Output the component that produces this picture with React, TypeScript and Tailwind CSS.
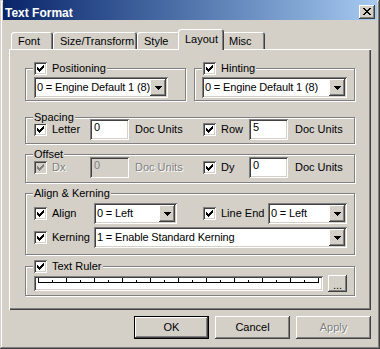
import React from 'react';

const raised = 'shadow-[inset_-1px_-1px_#404040,inset_1px_1px_#fff,inset_-2px_-2px_#808080,inset_2px_2px_#d4d0c8]';
const sunken = 'shadow-[inset_1px_1px_#808080,inset_-1px_-1px_#fff,inset_2px_2px_#404040,inset_-2px_-2px_#d4d0c8]';
const grayText = 'text-[#808080] [text-shadow:1px_1px_0_#fff]';

const CHECK = [
  [6, 0], [5, 1], [6, 1], [0, 2], [4, 2], [5, 2], [6, 2], [0, 3], [1, 3], [3, 3], [4, 3], [5, 3],
  [0, 4], [1, 4], [2, 4], [3, 4], [4, 4], [1, 5], [2, 5], [3, 5], [2, 6],
];
const CLOSE = [
  [0, 0], [1, 0], [6, 0], [7, 0], [1, 1], [2, 1], [5, 1], [6, 1], [2, 2], [3, 2], [4, 2], [5, 2],
  [3, 3], [4, 3], [2, 4], [3, 4], [4, 4], [5, 4], [1, 5], [2, 5], [5, 5], [6, 5], [0, 6], [1, 6], [6, 6], [7, 6],
];

function Pixels({ cells, w, h, color }: { cells: number[][]; w: number; h: number; color: string }) {
  return (
    <svg width={w} height={h} className="block" shapeRendering="crispEdges">
      {cells.map(([x, y]) => (
        <rect key={`${x}-${y}`} x={x} y={y} width={1} height={1} fill={color} />
      ))}
    </svg>
  );
}

function Check({ off }: { off?: boolean }) {
  return (
    <span className={`shrink-0 w-[13px] h-[13px] p-[3px] ${sunken} ${off ? 'bg-[#d4d0c8]' : 'bg-white'}`}>
      <Pixels cells={CHECK} w={7} h={7} color={off ? '#808080' : '#000'} />
    </span>
  );
}

function Arrow() {
  return (
    <svg width="7" height="4" className="block" shapeRendering="crispEdges">
      <rect x="0" y="0" width="7" height="1" fill="#000" />
      <rect x="1" y="1" width="5" height="1" fill="#000" />
      <rect x="2" y="2" width="3" height="1" fill="#000" />
      <rect x="3" y="3" width="1" height="1" fill="#000" />
    </svg>
  );
}

function Select({ value, className }: { value: string; className: string }) {
  return (
    <div className={`h-[21px] bg-white ${sunken} flex items-center p-[2px] ${className}`}>
      <span className="flex-1 min-w-0 pl-[1px] whitespace-nowrap tracking-[-0.15px]">{value}</span>
      <span className={`shrink-0 w-[16px] h-[17px] bg-[#d4d0c8] ${raised} flex items-center justify-center`}>
        <Arrow />
      </span>
    </div>
  );
}

function Field({ value, off }: { value: string; off?: boolean }) {
  return (
    <div className={`w-[39px] h-[21px] ${sunken} pl-[4px] pt-[2px] ${off ? 'bg-[#d4d0c8] text-[#808080]' : 'bg-white'}`}>
      {value}
    </div>
  );
}

function Group({ legend, className, children }: { legend: React.ReactNode; className: string; children: React.ReactNode }) {
  return (
    <div className={`relative border border-[#808080] shadow-[inset_1px_1px_#fff,1px_1px_#fff] ${className}`}>
      <div className="absolute left-[7px] -top-[7px] h-[13px] px-[1px] bg-[#d4d0c8] flex items-center gap-[5px]">
        {legend}
      </div>
      {children}
    </div>
  );
}

function Labeled({ label, off, className }: { label: string; off?: boolean; className: string }) {
  return (
    <div className={`flex items-center gap-[5px] ${className}`}>
      <Check off={off} />
      <span className={off ? grayText : ''}>{label}</span>
    </div>
  );
}

function Ruler() {
  const ticks = Array.from({ length: 21 }, (_, k) => k);
  return (
    <div className={`w-[289px] h-[15px] bg-white ${sunken}`}>
      <svg width="289" height="15" className="block" shapeRendering="crispEdges">
        <rect x="4" y="6" width="281" height="1" fill="#000" />
        {ticks.map((k) => (
          <rect key={k} x={4 + k * 14} y={k % 2 === 0 ? 2 : 4} width="1" height={k % 2 === 0 ? 4 : 2} fill="#000" />
        ))}
      </svg>
    </div>
  );
}

function Tab({ label, className }: { label: string; className: string }) {
  return (
    <div className={`rounded-t-[3px] bg-[#d4d0c8] shadow-[inset_1px_1px_#fff,inset_-1px_0_#404040,inset_-2px_0_#808080] pl-[7px] ${className}`}>
      {label}
    </div>
  );
}

export default function App() {
  return (
    <div className="w-[380px] h-[349px] overflow-hidden bg-[#d4d0c8] px-[3px] flex flex-col font-['Liberation_Sans',Arial,sans-serif] text-[11px] leading-[13px] text-black shadow-[inset_-1px_-1px_#404040,inset_1px_1px_#d4d0c8,inset_-2px_-2px_#808080,inset_2px_2px_#fff]">
      <div className="h-[20px] shrink-0 bg-linear-to-r from-[#0a246a] to-[#a6caf0] flex justify-between pl-[2px] pr-[2px]">
        <span className="pt-[6px] leading-[14px] text-[12px] font-bold text-white">Text Format</span>
        <span className={`self-end mb-[1px] w-[16px] h-[14px] bg-[#d4d0c8] ${raised} pl-[4px] pt-[3px]`}>
          <Pixels cells={CLOSE} w={8} h={7} color="#000" />
        </span>
      </div>

      <div className="mt-[9px] ml-[8px] h-[20px] flex items-end">
        <Tab label="Font" className="w-[42px] h-[17px] pt-[3px]" />
        <Tab label="Size/Transform" className="w-[84px] h-[17px] pt-[3px]" />
        <Tab label="Style" className="w-[43px] h-[17px] pt-[3px]" />
        <Tab label="Layout" className="relative z-10 -ml-[2px] -mb-[1px] w-[46px] h-[21px] pt-[4px]" />
        <Tab label="Misc" className="-ml-[2px] w-[43px] h-[17px] pt-[3px]" />
      </div>

      <div className="ml-[6px] w-[362px] h-[261px] shrink-0 pt-px px-[16px] flex flex-col shadow-[inset_1px_1px_#fff,inset_-1px_-1px_#404040,inset_-2px_-2px_#808080]">
        <div className="mt-[18px] flex gap-[8px]">
          <Group
            className="w-[161px] pt-[8px] pb-[2px] pl-[8px]"
            legend={<><Check /><span>Positioning</span></>}
          >
            <Select value="0 = Engine Default 1 (8)" className="w-[134px]" />
          </Group>
          <Group
            className="w-[161px] pt-[8px] pb-[2px] pl-[7px]"
            legend={<><Check /><span>Hinting</span></>}
          >
            <Select value="0 = Engine Default 1 (8)" className="w-[145px]" />
          </Group>
        </div>

        <Group className="mt-[16px] pt-[1px] pb-[3px] pl-[8px]" legend={<span>Spacing</span>}>
          <div className="flex items-center">
            <div className="w-[169px] flex items-center">
              <Labeled label="Letter" className="w-[56px]" />
              <Field value="0" />
              <span className="ml-[6px]">Doc Units</span>
            </div>
            <div className="flex items-center">
              <Labeled label="Row" className="w-[46px]" />
              <Field value="5" />
              <span className="ml-[7px]">Doc Units</span>
            </div>
          </div>
        </Group>

        <Group className="mt-[10px] pt-[2px] pb-[4px] pl-[8px]" legend={<span>Offset</span>}>
          <div className="flex items-center">
            <div className="w-[169px] flex items-center">
              <Labeled label="Dx" off className="w-[56px]" />
              <Field value="0" off />
              <span className={`ml-[6px] ${grayText}`}>Doc Units</span>
            </div>
            <div className="flex items-center">
              <Labeled label="Dy" className="w-[46px]" />
              <Field value="0" />
              <span className="ml-[7px]">Doc Units</span>
            </div>
          </div>
        </Group>

        <Group className="mt-[10px] pt-[9px] pb-[6px] pl-[8px] flex flex-col gap-[3px]" legend={<span>Align &amp; Kerning</span>}>
          <div className="flex items-center">
            <div className="w-[169px] flex items-center">
              <Labeled label="Align" className="w-[60px]" />
              <Select value="0 = Left" className="w-[83px]" />
            </div>
            <div className="flex items-center">
              <Labeled label="Line End" className="w-[65px]" />
              <Select value="0 = Left" className="w-[79px]" />
            </div>
          </div>
          <div className="flex items-center">
            <Labeled label="Kerning" className="w-[60px]" />
            <Select value="1 = Enable Standard Kerning" className="w-[253px]" />
          </div>
        </Group>

        <Group className="mt-[11px] pt-[8px] pb-[3px] pl-[8px]" legend={<><Check /><span>Text Ruler</span></>}>
          <div className="flex items-center">
            <Ruler />
            <div className={`ml-[5px] w-[19px] h-[17px] ${raised} flex items-end justify-center pb-[3px] leading-[8px]`}>...</div>
          </div>
        </Group>
      </div>

      <div className="mt-[6px] ml-[6px] w-[362px] flex justify-end gap-[6px]">
        <div className={`w-[75px] h-[23px] border border-black ${raised} flex items-center justify-center`}>OK</div>
        <div className={`w-[75px] h-[23px] ${raised} flex items-center justify-center`}>Cancel</div>
        <div className={`w-[75px] h-[23px] ${raised} flex items-center justify-center ${grayText}`}>Apply</div>
      </div>
    </div>
  );
}
